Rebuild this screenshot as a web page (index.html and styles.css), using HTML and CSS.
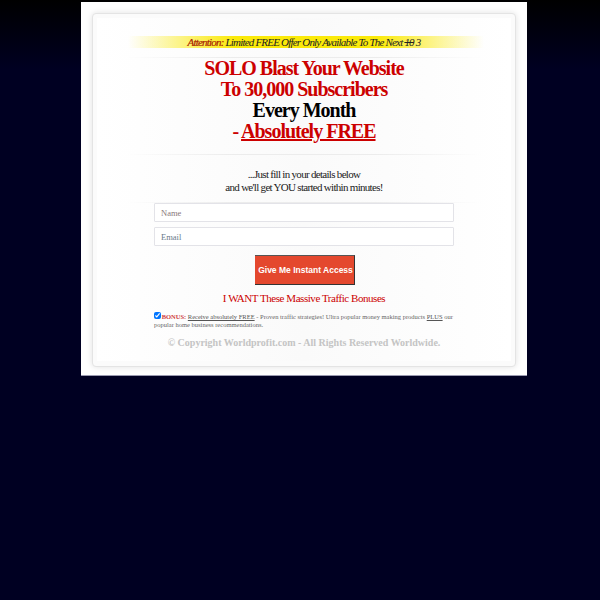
FILE: index.html
```html
<!DOCTYPE html>
<html lang="en">
<head>
<meta charset="utf-8">
<title>SOLO Blast</title>
<link rel="stylesheet" href="styles.css">
</head>
<body>
<main class="page">
  <div class="card">
    <div class="inner">
      <p class="attention"><b>Attention:</b> Limited FREE Offer Only Available To The Next <s>10</s> 3</p>
      <hr class="rule rule-top">
      <h1 class="headline">
        <span class="red">SOLO Blast Your Website</span>
        <span class="red">To 30,000 Subscribers</span>
        <span>Every Month</span>
        <span class="red">- <u>Absolutely FREE</u></span>
      </h1>
      <hr class="rule rule-mid">
      <p class="intro">...Just fill in your details below<br>and we'll get YOU started within minutes!</p>
      <hr class="rule rule-form">
      <form class="form">
        <input class="field field-name" type="text" placeholder="Name">
        <input class="field field-email" type="text" placeholder="Email">
        <button class="submit" type="button">Give Me Instant Access</button>
      </form>
      <p class="want">I WANT These Massive Traffic Bonuses</p>
      <div class="bonus">
        <p class="bonus-line"><input class="check" type="checkbox" checked> <b class="bonus-label">BONUS:</b> <u>Receive absolutely FREE</u> - Proven traffic strategies! Ultra popular money making products <u>PLUS</u> our</p>
        <p class="bonus-line">popular home business recommendations.</p>
      </div>
      <p class="copy">© Copyright Worldprofit.com - All Rights Reserved Worldwide.</p>
    </div>
  </div>
</main>
</body>
</html>
```
FILE: styles.css
```css
* { box-sizing: border-box; }
html { background: #000022; }
body {
  margin: 0;
  height: 600px;
  padding-top: 2px;
  overflow: hidden;
  background: linear-gradient(#000000 0, #000022 70px);
  font-family: "Liberation Serif", serif;
}
.page {
  width: 446px;
  height: 374px;
  margin-left: 81px;
  padding: 11px 11px 9px;
  background: #fff;
  border-bottom: 1px solid #9a9ab0;
}
.card {
  height: 354px;
  padding: 4px 4px 0;
  border: 1px solid #e4e4e4;
  border-radius: 4px;
  background: #fbfbfb;
  box-shadow: 0 0 6px rgba(0,0,0,.12);
}
.inner {
  height: 343px;
  padding-top: 18px;
  background: linear-gradient(90deg, #fff 0, #fafafa 50%, #fff 100%);
  text-align: center;
}
.attention {
  width: 356px;
  height: 12px;
  margin: 0 0 0 31px;
  padding-right: 4px;
  background: linear-gradient(90deg, rgba(255,240,0,0), #fbea0a 30%, #fbea0a 70%, rgba(255,240,0,0));
  font-size: 11px;
  line-height: 12px;
  font-style: italic;
  letter-spacing: -.8px;
  color: #222;
}
.attention b { color: #a82000; font-weight: 400; -webkit-text-stroke: .2px #a82000; }
.rule {
  height: 1px;
  margin: 0 auto;
  border: 0;
  background: linear-gradient(90deg, rgba(235,235,235,0), #ececec 30%, #ececec 70%, rgba(235,235,235,0));
}
.rule-top { width: 356px; margin-top: 9px; }
.headline {
  margin: 0;
  font-size: 20px;
  line-height: 21px;
  letter-spacing: -1px;
  font-weight: 700;
  color: #000;
}
.headline span { display: block; }
.red { color: #cc0000; }
.rule-mid { width: 356px; margin-top: 12px; }
.intro {
  margin: 13px 0 0;
  font-size: 11px;
  line-height: 13px;
  letter-spacing: -.7px;
  color: #222;
}
.rule-form { width: 356px; margin-top: 8px; }
.form {
  display: flex;
  flex-direction: column;
  align-items: center;
}
.field {
  display: block;
  width: 300px;
  height: 19px;
  padding: 0 6px;
  border: 1px solid #e3e3e8;
  border-radius: 1px;
  background: #fff;
  font-family: "Liberation Serif", serif;
  font-size: 8.5px;
}
.field-email { margin-top: 5px; }
.field-name::placeholder { color: #8a7a7a; opacity: 1; }
.field-email::placeholder { color: #6a7a8a; opacity: 1; }
.submit {
  width: 100px;
  height: 30px;
  margin: 9px 0 0 1px;
  padding: 0 0 0 3px;
  border: 0;
  border-right: 1px solid #333;
  border-bottom: 1px solid #333;
  border-top: 1px solid #555;
  background: #e4482e;
  color: #fff;
  font-family: "Liberation Sans", sans-serif;
  font-size: 8.5px;
  font-weight: 700;
  white-space: nowrap;
}
.want {
  margin: 7px 0 0;
  font-size: 11px;
  line-height: 13px;
  letter-spacing: -.45px;
  color: #cc0000;
}
.bonus {
  width: 300px;
  margin: 7px 0 0 57px;
  font-size: 6.5px;
  line-height: 8px;
  text-align: left;
  color: #666;
}
.bonus-line { margin: 0; white-space: nowrap; }
.bonus u { color: #555; }
.bonus-label { color: #d04040; }
.check {
  width: 7px;
  height: 7px;
  margin: 0 -1px 0 0;
  vertical-align: -0.5px;
}
.copy {
  margin: 8px 0 0;
  font-size: 10px;
  line-height: 12px;
  font-weight: 700;
  color: #c4c4c4;
}
```
